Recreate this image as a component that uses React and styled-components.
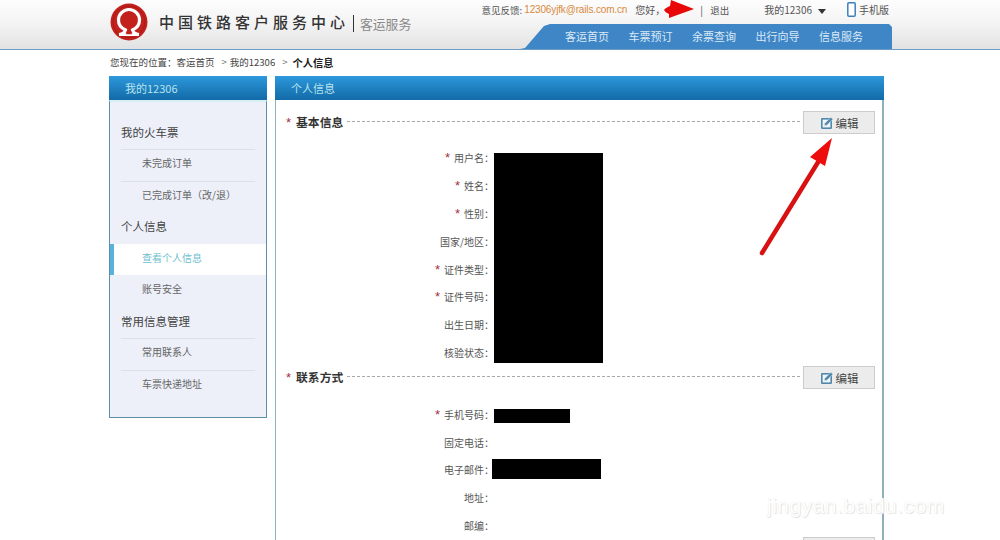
import React from "react";
import styled, { createGlobalStyle } from "styled-components";

const FONT = '"Noto Sans CJK SC", "Liberation Sans", sans-serif';
const ACTIVE_ITEM = "查看个人信息";

const GlobalStyle = createGlobalStyle`
  html, body {
    margin: 0;
    padding: 0;
    background: #fff;
    font-family: ${FONT};
    color: #555;
  }
`;

const sideGroups = [
  { title: "我的火车票", items: ["未完成订单", "已完成订单（改/退）"] },
  { title: "个人信息", items: [ACTIVE_ITEM, "账号安全"] },
  { title: "常用信息管理", items: ["常用联系人", "车票快递地址"] },
];

const basicRows = [
  { label: "用户名", star: true },
  { label: "姓名", star: true },
  { label: "性别", star: true },
  { label: "国家/地区" },
  { label: "证件类型", star: true },
  { label: "证件号码", star: true },
  { label: "出生日期" },
  { label: "核验状态" },
];

const navItems = ["客运首页", "车票预订", "余票查询", "出行向导", "信息服务"];

const EditIcon = () => (
  <svg width="14" height="14" viewBox="0 0 14 14">
    <rect x="1" y="2" width="11" height="11" rx="1.200" fill="#4f88ad" />
    <rect x="2.600" y="3.600" width="7.800" height="7.800" fill="#f2f5f7" />
    <path d="M4.400 9.800 4.900 7.300 10.900 1.300l2 2-6 6z" fill="#4f88ad" stroke="#ececec" strokeWidth="0.500" />
  </svg>
);

const Logo = () => (
  <svg width="38" height="38" viewBox="0 0 38 38">
    <circle cx="19" cy="19" r="18.500" fill="#c3211d" />
    <circle cx="19" cy="19" r="16" fill="none" stroke="#a81a17" strokeWidth="1" />
    <path
      d="M9 31.500C12 31 15 30 15.500 27 11 25 8.500 21 8.500 17a10.500 10.500 0 0 1 21 0c0 4-2.500 8-7 10 .5 3 3.500 4 6.500 4.500"
      fill="none"
      stroke="#fff"
      strokeWidth="3.200"
    />
    <path d="M9 33h20v-2.800H9z" fill="#fff" />
    <path d="M16.800 28h4.400l.6 3.200h-5.600z" fill="#c3211d" />
  </svg>
);

const PhoneIcon = () => (
  <svg width="9" height="15" viewBox="0 0 9 15">
    <rect x="0.800" y="0.800" width="7.400" height="13.400" rx="1" fill="#fff" stroke="#3c80bd" strokeWidth="1.500" />
  </svg>
);

const SectionHead = ({ title, tail }) => (
  <Head $tail={tail}>
    {title && <Star>*</Star>}
    {title && <HeadTitle>{title}</HeadTitle>}
    <DashLine />
    <EditButton>
      {!tail && <EditIcon />}
      {!tail && "编辑"}
    </EditButton>
  </Head>
);

const InfoRow = ({ label, star, children }) => (
  <Row>
    <RowLabel>
      {star && <Star $small>*</Star>}
      {label}：
    </RowLabel>
    <RowValue>{children}</RowValue>
  </Row>
);

const App = () => {
  return (
    <Page>
      <GlobalStyle />
      <Header>
        <HeaderInner>
          <Brand>
            <Logo />
            <BrandName>中国铁路客户服务中心</BrandName>
            <BrandSub>客运服务</BrandSub>
          </Brand>
          <HeaderRight>
            <TopLinks>
              <TopText>意见反馈: </TopText>
              <Mail>12306yjfk@rails.com.cn</Mail>
              <Hello>您好，</Hello>
              <Sep>|</Sep>
              <TopText>退出</TopText>
              <MyMenu>我的12306</MyMenu>
              <Caret />
              <PhoneLink>
                <PhoneIcon />
                手机版
              </PhoneLink>
            </TopLinks>
            <Nav>
              {navItems.map((item) => (
                <NavItem key={item}>{item}</NavItem>
              ))}
            </Nav>
          </HeaderRight>
        </HeaderInner>
      </Header>

      <Crumbs>
        您现在的位置：客运首页<CrumbGap>&gt;</CrumbGap>我的12306<CrumbGap>&gt;</CrumbGap>
        <b>个人信息</b>
      </Crumbs>

      <Content>
        <Side>
          <PanelTitle>我的12306</PanelTitle>
          <SideBody>
            {sideGroups.map((group) => (
              <div key={group.title}>
                <SideHeading>{group.title}</SideHeading>
                {group.items.map((item, i) => (
                  <SideItem
                    key={item}
                    $active={item === ACTIVE_ITEM}
                    $noRule={item === ACTIVE_ITEM || group.items[i - 1] === ACTIVE_ITEM}
                  >
                    {item}
                  </SideItem>
                ))}
              </div>
            ))}
          </SideBody>
        </Side>

        <Main>
          <PanelTitle>个人信息</PanelTitle>
          <MainBody>
            <SectionHead title="基本信息" />
            <Rows>
              {basicRows.map((row) => (
                <InfoRow key={row.label} label={row.label} star={row.star} />
              ))}
              <Redact $left={218} $top={9} $w={109} $h={210} />
            </Rows>

            <SectionHead title="联系方式" />
            <Rows $contact>
              <InfoRow label="手机号码" star>
                <Redact $left={0} $top={9} $w={76} $h={14} />
              </InfoRow>
              <InfoRow label="固定电话" />
              <InfoRow label="电子邮件">
                <Redact $left={-2} $top={3} $w={109} $h={20} />
              </InfoRow>
              <InfoRow label="地址" />
              <InfoRow label="邮编" />
            </Rows>

            <SectionHead tail />
          </MainBody>
        </Main>
      </Content>

      <TopArrow width="34" height="20" viewBox="0 0 34 20">
        <path d="M1 10C2 8 5 7 7 6L8 0 31 9 6 18 6 14C4 13 2 12 1 10z" fill="#e80808" />
      </TopArrow>
      <BigArrow width="90" height="130" viewBox="0 0 90 130">
        <path d="M4 121 62 27" stroke="#d81212" strokeWidth="4.500" strokeLinecap="round" fill="none" />
        <path d="M74 6 67 34 52 25z" fill="#ee0d0d" />
      </BigArrow>
      <Watermark>jingyan.baidu.com</Watermark>
    </Page>
  );
};

const Page = styled.div`
  position: relative;
  width: 1000px;
  height: 540px;
  overflow: hidden;
  background: #fff;
  font-size: 10px;
`;

const Header = styled.header`
  height: 49px;
  background: linear-gradient(#fdfdfd, #f3f3f3 50%, #e2e2e2);
  border-bottom: 1px solid #6d9cc6;
`;

const HeaderInner = styled.div`
  display: flex;
  justify-content: space-between;
  width: 783px;
  height: 49px;
  margin-left: 109px;
`;

const Brand = styled.div`
  display: flex;
  align-items: center;
  height: 43px;
  padding-left: 1px;
`;

const BrandName = styled.div`
  margin-left: 11px;
  font-size: 15px;
  font-weight: 500;
  letter-spacing: 4px;
  color: #333;
  white-space: nowrap;
`;

const BrandSub = styled.div`
  margin: 3px 0 0 4px;
  padding-left: 6px;
  border-left: 1px solid #333;
  height: 17px;
  line-height: 17px;
  font-size: 12.800px;
  color: #8a8a8a;
  white-space: nowrap;
`;

const HeaderRight = styled.div`
  display: flex;
  flex-direction: column;
  align-items: flex-end;
`;

const TopLinks = styled.div`
  display: flex;
  align-items: center;
  height: 24px;
  padding: 0 3px 5px 0;
  box-sizing: border-box;
  white-space: pre;
  color: #555;
`;

const TopText = styled.span`
  font-size: 9.500px;
`;

const Mail = styled.span`
  font-family: "Liberation Sans", sans-serif;
  font-size: 10px;
  letter-spacing: -0.150px;
  color: #d98a3d;
`;

const Hello = styled.span`
  width: 65px;
  margin-left: 8px;
`;

const Sep = styled.span`
  width: 10px;
`;

const MyMenu = styled.span`
  margin-left: 35px;
`;

const Caret = styled.span`
  width: 0;
  height: 0;
  margin: 3px 0 0 6px;
  border: 4.500px solid transparent;
  border-top: 5px solid #333;
  border-bottom: 0;
`;

const PhoneLink = styled.span`
  display: flex;
  align-items: center;
  gap: 3px;
  margin-left: 21px;
`;

const Nav = styled.nav`
  display: flex;
  gap: 19.500px;
  width: 372px;
  height: 25px;
  padding-left: 45px;
  box-sizing: border-box;
  background: #3f86c7;
  clip-path: polygon(0 100%, 5px 96%, 24px 8%, 30px 0, 369px 0, 372px 3px, 372px 100%);
`;

const NavItem = styled.span`
  font-size: 11px;
  line-height: 25px;
  color: #dbe9f5;
  white-space: nowrap;
`;

const Crumbs = styled.div`
  display: flex;
  align-items: center;
  box-sizing: border-box;
  height: 26px;
  padding-bottom: 2px;
  margin-left: 110px;
  font-size: 9.500px;
  color: #444;
  white-space: pre;
  b {
    margin-left: 2px;
    font-size: 10.300px;
    color: #222;
  }
`;

const CrumbGap = styled.span`
  margin: 0 3px 0 7px;
  color: #777;
`;

const Content = styled.div`
  display: flex;
  gap: 8px;
  margin-left: 109px;
`;

const Side = styled.aside`
  display: flex;
  flex-direction: column;
  width: 158px;
  height: 342px;
`;

const PanelTitle = styled.div`
  flex: none;
  height: 24px;
  padding-left: 16px;
  line-height: 24px;
  font-size: 11px;
  color: #b7e3ee;
  background: linear-gradient(#2d99dc, #1a77b6 70%, #136ba8);
`;

const SideBody = styled.div`
  flex: 1;
  padding-top: 15.500px;
  border: 1px solid #5b8fa5;
  border-top: 2px solid #d7eef5;
  background: #edf0f9;
`;

const SideHeading = styled.div`
  height: 31.500px;
  padding-left: 11px;
  line-height: 29px;
  font-size: 11.500px;
  color: #444;
`;

const SideItem = styled.div`
  position: relative;
  height: 31.500px;
  padding-left: ${(p) => (p.$active ? "28px" : "32px")};
  line-height: 28px;
  color: ${(p) => (p.$active ? "#6cc0cf" : "#666")};
  background: ${(p) => (p.$active ? "#fff" : "none")};
  border-left: ${(p) => (p.$active ? "4px solid #58b2dc" : "0")};
  &::before {
    content: "";
    display: ${(p) => (p.$noRule ? "none" : "block")};
    position: absolute;
    top: 0;
    left: 11px;
    right: 11px;
    border-top: 1px solid #dcdfe6;
  }
`;

const Main = styled.main`
  display: flex;
  flex-direction: column;
  width: 609px;
`;

const MainBody = styled.div`
  height: 440px;
  padding: 11px 7px 0 0;
  border-left: 1px solid #8fb0bd;
  border-right: 2px solid #8fb0bd;
`;

const Head = styled.div`
  display: flex;
  align-items: center;
  height: 23px;
  margin-top: ${(p) => (p.$tail ? "-2px" : "0")};
`;

const Star = styled.span`
  margin-left: ${(p) => (p.$small ? "0" : "10px")};
  margin-right: ${(p) => (p.$small ? "4px" : "0")};
  font-family: "Liberation Sans", sans-serif;
  font-size: 13px;
  color: #a5303f;
  line-height: 1;
`;

const HeadTitle = styled.div`
  margin-left: 5px;
  padding-bottom: 2px;
  font-size: 11.800px;
  font-weight: 700;
  color: #333;
  white-space: nowrap;
`;

const DashLine = styled.div`
  flex: 1;
  margin: 0 3px 2px 4px;
  border-top: 1px dashed #aaa;
`;

const EditButton = styled.div`
  display: flex;
  flex: none;
  align-items: center;
  justify-content: center;
  gap: 2px;
  box-sizing: border-box;
  width: 72px;
  height: 23px;
  font-size: 11.500px;
  color: #444;
  background: #ececec;
  border: 1px solid #ccc;
`;

const Rows = styled.div`
  position: relative;
  margin-top: ${(p) => (p.$contact ? "11px" : "10px")};
`;

const Row = styled.div`
  display: flex;
  height: 27.800px;
  align-items: center;
`;

const RowLabel = styled.div`
  width: 218px;
  flex: none;
  text-align: right;
  font-size: 10px;
  color: #555;
  white-space: nowrap;
`;

const RowValue = styled.div`
  position: relative;
  flex: 1;
  align-self: stretch;
`;

const Redact = styled.div`
  position: absolute;
  left: ${(p) => p.$left}px;
  top: ${(p) => p.$top}px;
  width: ${(p) => p.$w}px;
  height: ${(p) => p.$h}px;
  background: #000;
`;

const TopArrow = styled.svg`
  position: absolute;
  left: 663px;
  top: 0;
`;

const BigArrow = styled.svg`
  position: absolute;
  left: 758px;
  top: 132px;
`;

const Watermark = styled.div`
  position: absolute;
  left: 767px;
  top: 494px;
  font-family: "Liberation Sans", sans-serif;
  font-size: 21px;
  letter-spacing: 0.500px;
  color: #fff;
  text-shadow: 0 0 1px #ddd, 1px 1px 1px #e4e4e4;
  white-space: nowrap;
`;

export default App;
